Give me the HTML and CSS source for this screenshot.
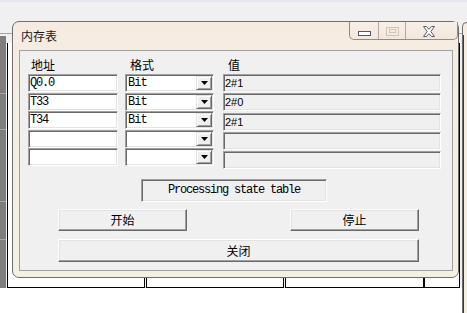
FILE: index.html
```html
<!DOCTYPE html>
<html>
<head>
<meta charset="utf-8">
<link rel="stylesheet" href="styles.css">
</head>
<body>
<div class="appbar"></div>
<div class="workspace">
  <div class="sidebar">
    <div class="sb sb1"></div>
    <div class="sb sb2"></div>
    <div class="sb sb3"></div>
    <div class="sb sb4"></div>
    <div class="sb sb5"></div>
  </div>
  <div class="sheet">
    <div class="cell c1"></div>
    <div class="cell c2"></div>
    <div class="cell c3"></div>
    <div class="cell c4"></div>
  </div>
</div>
<div class="win2"><div class="win2-client"></div></div>

<div class="dialog">
  <div class="titlebar">
    <span class="title">内存表</span>
    <div class="caption-btns">
      <span class="cb cb-min"><svg width="13" height="5" viewBox="0 0 13 5"><rect x="0.5" y="0.5" width="12" height="4" fill="#fdfdfd" stroke="#4f5866"/></svg></span>
      <span class="cb cb-max"><svg width="13" height="9" viewBox="0 0 13 9"><rect x="0.5" y="0.5" width="12" height="8" fill="none" stroke="#cfc4b8"/><rect x="3.5" y="2.5" width="6" height="3" fill="none" stroke="#cfc4b8"/></svg></span>
      <span class="cb cb-close"><svg width="12" height="11" viewBox="0 0 12 11"><polygon points="0.5,0.5 3.5,0.5 6,3.3 8.5,0.5 11.5,0.5 7.8,5.5 11.5,10.5 8.5,10.5 6,7.7 3.5,10.5 0.5,10.5 4.2,5.5" fill="#ffffff" stroke="#555d6b" stroke-linejoin="round"/></svg></span>
    </div>
  </div>
  <div class="client">
    <div class="fields">
      <div class="col col-addr">
        <div class="hdr">地址</div>
        <div class="stack">
          <div class="edit">Q0.0</div>
          <div class="edit">T33</div>
          <div class="edit">T34</div>
          <div class="edit"></div>
          <div class="edit"></div>
        </div>
      </div>
      <div class="col col-fmt">
        <div class="hdr">格式</div>
        <div class="stack">
          <div class="combo"><span class="combo-text">Bit</span><span class="combo-btn"><svg width="7" height="4" viewBox="0 0 7 4"><polygon points="0,0 7,0 3.5,4" fill="#000"/></svg></span></div>
          <div class="combo"><span class="combo-text">Bit</span><span class="combo-btn"><svg width="7" height="4" viewBox="0 0 7 4"><polygon points="0,0 7,0 3.5,4" fill="#000"/></svg></span></div>
          <div class="combo"><span class="combo-text">Bit</span><span class="combo-btn"><svg width="7" height="4" viewBox="0 0 7 4"><polygon points="0,0 7,0 3.5,4" fill="#000"/></svg></span></div>
          <div class="combo"><span class="combo-text"></span><span class="combo-btn"><svg width="7" height="4" viewBox="0 0 7 4"><polygon points="0,0 7,0 3.5,4" fill="#000"/></svg></span></div>
          <div class="combo"><span class="combo-text"></span><span class="combo-btn"><svg width="7" height="4" viewBox="0 0 7 4"><polygon points="0,0 7,0 3.5,4" fill="#000"/></svg></span></div>
        </div>
      </div>
      <div class="col col-val">
        <div class="hdr">值</div>
        <div class="stack stack-val">
          <div class="val">2#1</div>
          <div class="val">2#0</div>
          <div class="val">2#1</div>
          <div class="val"></div>
          <div class="val"></div>
        </div>
      </div>
    </div>
    <div class="status">Processing state table</div>
    <div class="btn-row">
      <button class="btn btn-half">开始</button>
      <button class="btn btn-half">停止</button>
    </div>
    <button class="btn btn-wide">关闭</button>
  </div>
</div>
</body>
</html>
```

FILE: styles.css
```css
html, body {
  margin: 0;
  padding: 0;
}
body {
  width: 467px;
  height: 313px;
  overflow: hidden;
  position: relative;
  background: #ffffff;
  font-family: "Noto Sans CJK SC", sans-serif;
}

/* background application */
.appbar {
  height: 33px;
  background: linear-gradient(#e2e6f0 0, #e2e6f0 2px, #f0f0f0 2px);
  border-bottom: 1px solid #a3a3a3;
}
.workspace {
  display: flex;
  height: 254px;
  background: #f0f0f0;
}
.sidebar {
  width: 6px;
  margin-top: 2px;
  margin-right: 1px;
  display: flex;
  flex-direction: column;
  background: #7e7e7e;
}
.sb { border-bottom: 1px solid #a8a8a8; }
.sb1 { height: 57px; }
.sb2 { height: 35px; }
.sb3 { height: 71px; }
.sb4 { height: 37px; }
.sb5 { flex: 1; border-bottom: 0; }
.sheet {
  display: flex;
  margin-top: 9px;
  height: 245px;
}
.cell {
  box-sizing: border-box;
  height: 100%;
  border: 1px solid #000;
  border-top: 0;
  background: #fff;
}
.c1 { width: 138px; margin-right: 1px; }
.c2 { width: 138px; margin-right: 1px; }
.c3 { width: 139px; }
.c4 { width: 36px; }

.win2 {
  position: absolute;
  left: 462px;
  top: 22px;
  width: 5px;
  height: 291px;
  box-sizing: border-box;
  border-left: 1px solid #6c6c6c;
  border-top: 1px solid #6c6c6c;
  border-radius: 5px 0 0 0;
  background: linear-gradient(#f6ece2, #f3efe2);
}
.win2-client {
  margin-top: 12px;
  height: 278px;
  border-left: 1px solid #3a3a3a;
}

/* dialog window */
.dialog {
  position: absolute;
  left: 12px;
  top: 21px;
  width: 447px;
  height: 257px;
  box-sizing: border-box;
  border: 1px solid #6e6e6e;
  border-radius: 7px;
  background: linear-gradient(180deg, #f6ebe0 0%, #f5eee2 30%, #f3f0e2 100%);
  display: flex;
  flex-direction: column;
}
.titlebar {
  height: 28px;
  display: flex;
  justify-content: space-between;
  align-items: flex-start;
}
.title {
  padding: 7px 0 0 8px;
  font-size: 12px;
  line-height: 14px;
  color: #1a1a1a;
}
.caption-btns {
  display: flex;
  height: 18px;
  box-sizing: border-box;
  border: 1px solid #8c8c8c;
  border-top: 0;
  border-radius: 0 0 5px 5px;
  background: linear-gradient(#f8efe7, #f2e7dc);
}
.cb {
  display: flex;
  justify-content: center;
  align-items: flex-start;
  height: 17px;
  box-sizing: border-box;
}
.cb svg { display: block; }
.cb-min { width: 29px; border-right: 1px solid #b3aaa2; padding-top: 9px; }
.cb-max { width: 27px; border-right: 1px solid #b3aaa2; padding-top: 5px; }
.cb-close { width: 51px; justify-content: flex-start; padding-left: 17px; padding-top: 4px; }

.client {
  flex: 1;
  margin: 0 5px 6px 6px;
  border: 1px solid #a0a0a0;
  background: #f0f0f0;
  padding: 7px 0 0 8px;
  display: flex;
  flex-direction: column;
  align-items: flex-start;
}
.fields {
  display: flex;
  align-items: flex-start;
}
.col { display: flex; flex-direction: column; }
.col-addr { width: 90px; margin-right: 7px; }
.col-fmt { width: 89px; margin-right: 9px; }
.col-val { width: 218px; }
.hdr {
  height: 16px;
  font-size: 12px;
  line-height: 14px;
  color: #000;
}
.col-addr .hdr { padding-left: 3px; }
.col-fmt .hdr { padding-left: 5px; }
.col-val .hdr { padding-left: 5px; }
.stack {
  display: flex;
  flex-direction: column;
  gap: 0.6px;
}
.stack-val { gap: 1.25px; }

.edit, .val, .combo, .status {
  box-sizing: border-box;
  border: 1px solid;
  border-color: #a0a0a0 #ffffff #ffffff #a0a0a0;
  box-shadow: inset 1px 1px #696969, inset -1px -1px #e3e3e3;
}
.edit {
  height: 18px;
  background: #fff;
  padding-left: 1px;
  font-family: "Liberation Mono", monospace;
  font-size: 12px;
  letter-spacing: -1.2px;
  line-height: 16px;
  color: #000;
}
.val {
  height: 18px;
  background: #f0f0f0;
  padding-left: 1px;
  font-family: "Liberation Sans", sans-serif;
  font-size: 11px;
  line-height: 16px;
  color: #000;
}
.combo {
  height: 18px;
  background: #fff;
  padding: 1px;
  display: flex;
  align-items: stretch;
}
.combo-text {
  flex: 1;
  padding-left: 1px;
  font-family: "Liberation Mono", monospace;
  font-size: 12px;
  letter-spacing: -1px;
  line-height: 15px;
  color: #000;
}
.combo-btn {
  width: 16px;
  box-sizing: border-box;
  border: 1px solid;
  border-color: #e3e3e3 #696969 #696969 #e3e3e3;
  box-shadow: inset 1px 1px #fff, inset -1px -1px #a0a0a0;
  background: #f0f0f0;
  display: flex;
  align-items: center;
  justify-content: center;
}
.combo-btn svg { display: block; }

.status {
  margin: 10px 0 0 113px;
  width: 186px;
  height: 23px;
  background: #f0f0f0;
  text-align: center;
  font-family: "Liberation Mono", monospace;
  font-size: 12px;
  letter-spacing: -1.2px;
  line-height: 21px;
  color: #000;
}

.btn {
  box-sizing: border-box;
  border: 1px solid;
  border-color: #ffffff #696969 #696969 #ffffff;
  box-shadow: inset -1px -1px #a0a0a0, inset 1px 1px #e3e3e3;
  background: #f0f0f0;
  font-family: "Noto Sans CJK SC", sans-serif;
  font-size: 12px;
  line-height: 14px;
  color: #000;
  padding: 0;
  margin: 0;
}
.btn-row {
  display: flex;
  gap: 103px;
  margin: 7px 0 0 30px;
}
.btn-half { width: 129px; height: 22px; }
.btn-wide {
  margin: 8px 0 0 30px;
  width: 361px;
  height: 23px;
}
```
